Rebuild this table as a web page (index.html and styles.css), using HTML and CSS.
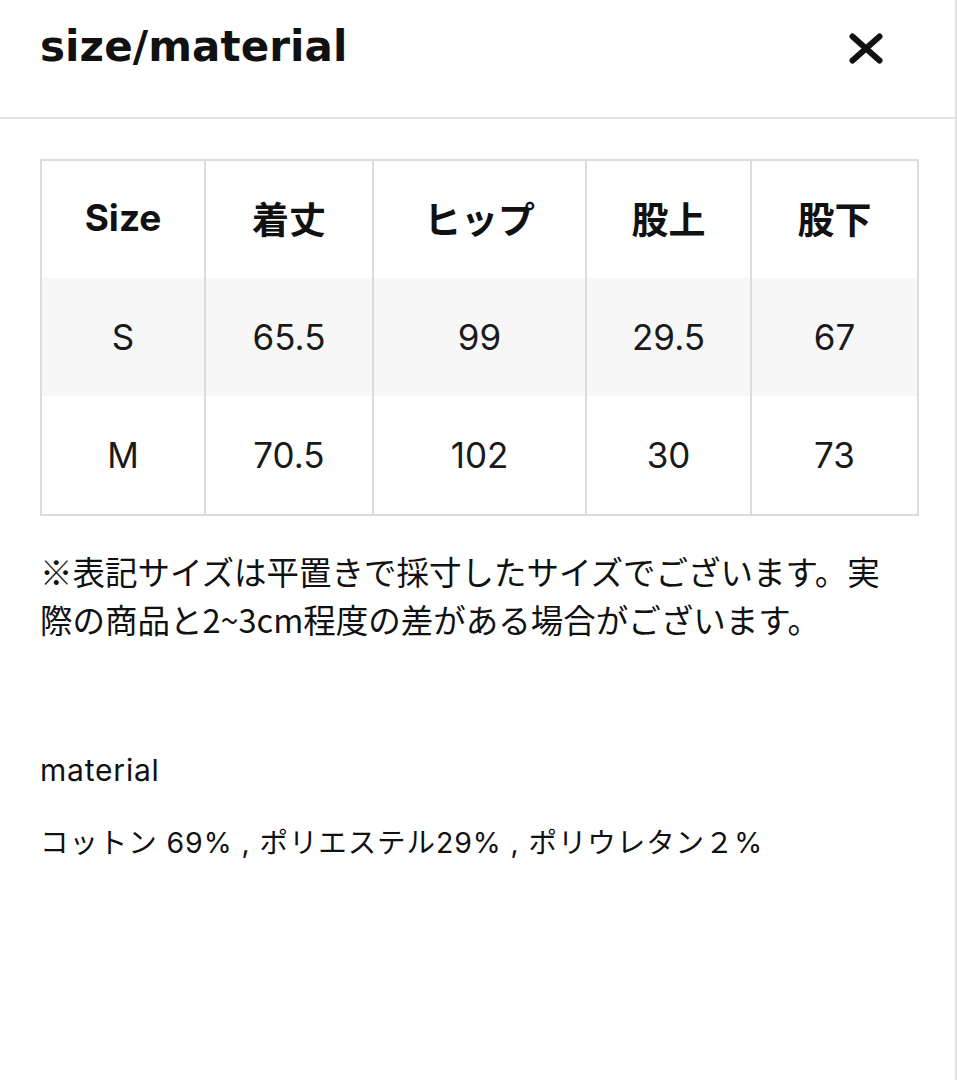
FILE: index.html
```html
<!DOCTYPE html>
<html lang="ja">
<head>
<meta charset="utf-8">
<title>size/material</title>
<link rel="stylesheet" href="styles.css">
</head>
<body>
<div class="page">
  <header class="header">
    <h1 class="title">size/material</h1>
    <button class="close" aria-label="close">
      <svg width="34" height="31" viewBox="0 0 34 31"><path d="M3.5 3.5 L30.5 27.5 M30.5 3.5 L3.5 27.5" stroke="#111" stroke-width="6" stroke-linecap="round" fill="none"/></svg>
    </button>
  </header>
  <main class="content">
    <table class="sizes">
      <colgroup>
        <col class="c1"><col class="c2"><col class="c3"><col class="c4"><col class="c5">
      </colgroup>
      <thead>
        <tr><th>Size</th><th>着丈</th><th>ヒップ</th><th>股上</th><th>股下</th></tr>
      </thead>
      <tbody>
        <tr class="alt"><td>S</td><td>65.5</td><td>99</td><td>29.5</td><td>67</td></tr>
        <tr><td>M</td><td>70.5</td><td>102</td><td>30</td><td>73</td></tr>
      </tbody>
    </table>
    <p class="note">※表記サイズは平置きで採寸したサイズでございます。実際の商品と2~3cm程度の差がある場合がございます。</p>
    <p class="label">material</p>
    <p class="materials">コットン 69% , ポリエステル29% , ポリウレタン２%</p>
  </main>
</div>
</body>
</html>
```

FILE: styles.css
```css
html, body {
  margin: 0;
  padding: 0;
  background: #fff;
}
.page {
  width: 957px;
  min-height: 1080px;
  box-sizing: border-box;
  border-right: 2px solid #e2e2e2;
  color: #111;
  font-family: Inter, "Noto Sans CJK JP", sans-serif;
}
.header {
  height: 119px;
  box-sizing: border-box;
  border-bottom: 2px solid #e2e2e2;
  padding: 22px 70px 0 40px;
  display: flex;
  justify-content: space-between;
  align-items: flex-start;
}
.title {
  margin: 0;
  font-family: "DejaVu Sans", sans-serif;
  font-weight: 700;
  font-size: 42px;
  line-height: 50px;
  letter-spacing: 0.1px;
  color: #111;
}
.close {
  margin-top: 11px;
  margin-right: 2px;
  padding: 0;
  border: 0;
  background: none;
  width: 34px;
  height: 31px;
  display: block;
}
.close svg { display: block; }
.content {
  padding: 40px 38px 0 40px;
}
.sizes {
  width: 877px;
  border-collapse: collapse;
  border: 2px solid #dcdcdc;
  table-layout: fixed;
}
.c1 { width: 164px; }
.c2 { width: 168px; }
.c3 { width: 213px; }
.c4 { width: 165px; }
.c5 { width: 167px; }
.sizes th, .sizes td {
  border-left: 2px solid #dcdcdc;
  border-right: 2px solid #dcdcdc;
  text-align: center;
  vertical-align: middle;
  padding: 0;
}
.sizes th {
  height: 113px;
  padding-bottom: 4px;
  font-family: Inter, "Noto Sans CJK JP", sans-serif;
  font-weight: 700;
  font-size: 37px;
  color: #111;
}
.sizes td {
  height: 118px;
  font-size: 35px;
  font-weight: 400;
  color: #1a1a1a;
}
.sizes tr.alt td {
  background: #f7f7f7;
}
.note {
  margin: 31px 0 0;
  max-width: 862px;
  font-family: "Noto Sans CJK JP", sans-serif;
  font-size: 32.5px;
  line-height: 48px;
  color: #111;
}
.label {
  margin: 107px 0 0;
  font-size: 30px;
  line-height: 40px;
  letter-spacing: 0.8px;
  color: #111;
}
.materials {
  margin: 33px 0 0;
  font-size: 28.5px;
  line-height: 40px;
  letter-spacing: 0.9px;
  color: #111;
}
```
